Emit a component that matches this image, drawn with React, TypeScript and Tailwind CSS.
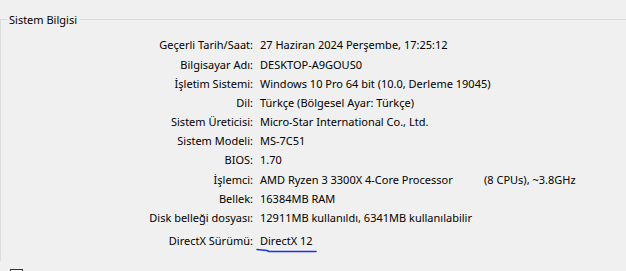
import React from "react";

const rows: [string, string][] = [
    ["Geçerli Tarih/Saat:", "27 Haziran 2024 Perşembe, 17:25:12"],
    ["Bilgisayar Adı:", "DESKTOP-A9GOUS0"],
    ["İşletim Sistemi:", "Windows 10 Pro 64 bit (10.0, Derleme 19045)"],
    ["Dil:", "Türkçe (Bölgesel Ayar: Türkçe)"],
    ["Sistem Üreticisi:", "Micro-Star International Co., Ltd."],
    ["Sistem Modeli:", "MS-7C51"],
    ["BIOS:", "1.70"],
    ["İşlemci:", ""],
    ["Bellek:", "16384MB RAM"],
    ["Disk belleği dosyası:", "12911MB kullanıldı, 6341MB kullanılabilir"],
];

function InfoRow({ label, children }: { label: string; children: React.ReactNode }) {
    return (
        <div className="flex h-[19.2px] items-center">
            <span className="w-[252px] shrink-0 text-right">{label}</span>
            <span className="ml-[7px] flex whitespace-nowrap">{children}</span>
        </div>
    );
}

export default function App() {
    return (
        <div
            className="relative h-[271px] w-[626px] overflow-hidden bg-[#f0f0f0] text-[11px] text-black"
            style={{ fontFamily: '"Noto Sans", "Liberation Sans", sans-serif' }}
        >
            <fieldset className="ml-0 mt-[12px] min-w-0 border-l border-t border-[#dcdcdc] pb-[10px]">
                <legend className="ml-[6px] px-[2px] leading-[15px]">Sistem Bilgisi</legend>
                <div className="pt-[9px]">
                    {rows.map(([label, value]) => (
                        <InfoRow key={label} label={label}>
                            {label === "İşlemci:" ? (
                                <>
                                    <span className="w-[224px]">AMD Ryzen 3 3300X 4-Core Processor</span>
                                    <span>(8 CPUs), ~3.8GHz</span>
                                </>
                            ) : (
                                value
                            )}
                        </InfoRow>
                    ))}
                    <div className="relative mt-[4px]">
                        <InfoRow label="DirectX Sürümü:">DirectX 12</InfoRow>
                        <svg
                            className="absolute left-[254px] top-[16px]"
                            width="64"
                            height="6"
                            viewBox="0 0 64 6"
                        >
                            <path
                                d="M2 1.5 L12 2.5 L14 3.5 L61 3.5"
                                fill="none"
                                stroke="#1f2fe8"
                                strokeWidth="1.6"
                                strokeLinecap="round"
                            />
                        </svg>
                    </div>
                </div>
            </fieldset>
            <div className="ml-[10px] mt-[8px] flex items-start gap-[5px]">
                <span className="h-[13px] w-[13px] shrink-0 border border-[#333333] bg-white" />
                <span className="mt-[2px] leading-[13px]">WHQL dijital imzalarını denetle</span>
            </div>
        </div>
    );
}
